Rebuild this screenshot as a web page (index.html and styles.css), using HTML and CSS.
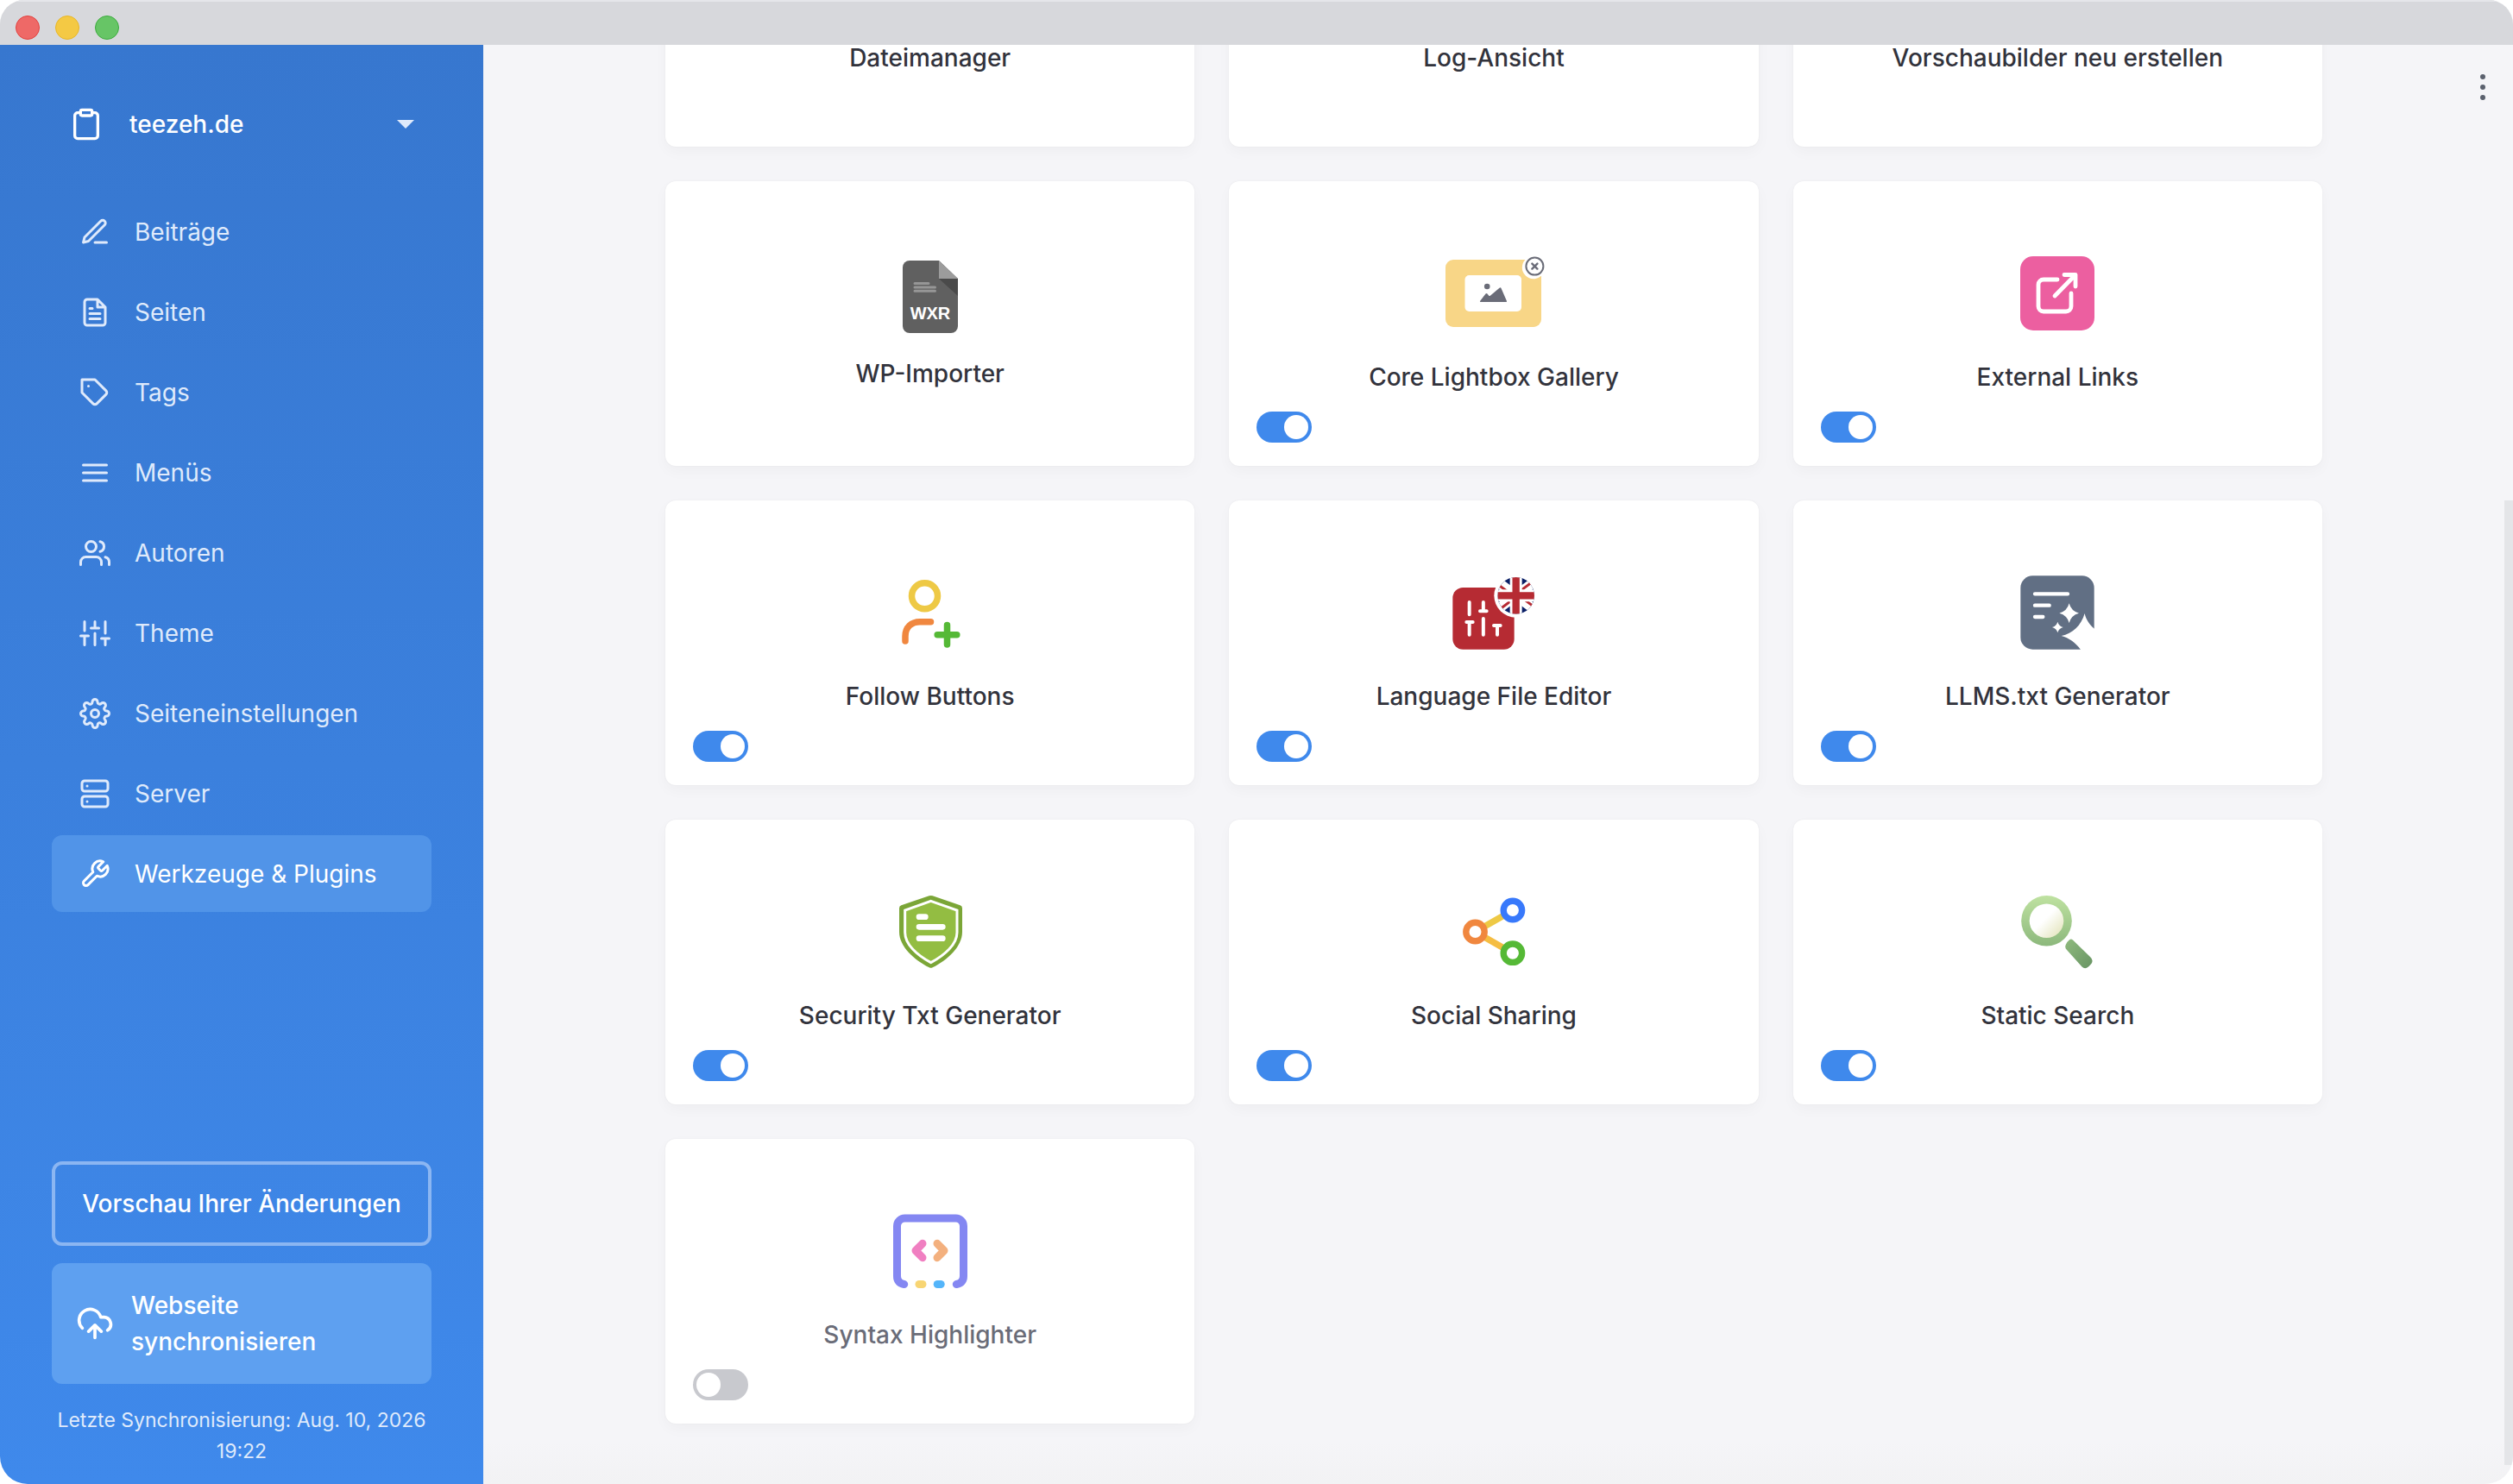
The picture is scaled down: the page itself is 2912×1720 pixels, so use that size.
FILE: index.html
```html
<!DOCTYPE html>
<html lang="de">
<head>
<meta charset="utf-8">
<title>Werkzeuge &amp; Plugins</title>
<link rel="stylesheet" href="styles.css">
</head>
<body>
<div class="window">
  <header class="titlebar">
    <button class="light light-close" type="button"></button>
    <button class="light light-min" type="button"></button>
    <button class="light light-max" type="button"></button>
  </header>
  <div class="app">
    <aside class="sidebar">
      <button class="site" type="button">
        <svg class="site-icon stroke-icon" viewBox="0 0 24 24"><path d="M16 4h2a2 2 0 0 1 2 2v14a2 2 0 0 1-2 2H6a2 2 0 0 1-2-2V6a2 2 0 0 1 2-2h2"/><rect x="8" y="2" width="8" height="4" rx="1"/></svg>
        <span class="site-name">teezeh.de</span>
        <svg class="caret" viewBox="0 0 20 10"><path d="M0 0h20L10 10z"/></svg>
      </button>
      <nav class="menu">
        <a class="menu-item" href="#"><svg class="menu-icon stroke-icon" viewBox="0 0 24 24"><path d="M12 20h9M16.500 3.500a2.121 2.121 0 0 1 3 3L7 19l-4 1 1-4z"/></svg>Beiträge</a>
        <a class="menu-item" href="#"><svg class="menu-icon stroke-icon" viewBox="0 0 24 24"><path d="M14 2H6a2 2 0 0 0-2 2v16a2 2 0 0 0 2 2h12a2 2 0 0 0 2-2V8zM14 2v6h6M16 13H8M16 17H8M10 9H8"/></svg>Seiten</a>
        <a class="menu-item" href="#"><svg class="menu-icon stroke-icon" viewBox="0 0 24 24"><path d="M20.590 13.410l-7.170 7.170a2 2 0 0 1-2.830 0L2 12V2h10l8.590 8.590a2 2 0 0 1 0 2.820zM7 7h.01"/></svg>Tags</a>
        <a class="menu-item" href="#"><svg class="menu-icon stroke-icon" viewBox="0 0 24 24"><path d="M3 12h18M3 6h18M3 18h18"/></svg>Menüs</a>
        <a class="menu-item" href="#"><svg class="menu-icon stroke-icon" viewBox="0 0 24 24"><path d="M17 21v-2a4 4 0 0 0-4-4H5a4 4 0 0 0-4 4v2M23 21v-2a4 4 0 0 0-3-3.870M16 3.130a4 4 0 0 1 0 7.750"/><circle cx="9" cy="7" r="4"/></svg>Autoren</a>
        <a class="menu-item" href="#"><svg class="menu-icon stroke-icon" viewBox="0 0 24 24"><path d="M4 21v-7M4 10V3M12 21v-9M12 8V3M20 21v-5M20 12V3M1 14h6M9 8h6M17 16h6"/></svg>Theme</a>
        <a class="menu-item" href="#"><svg class="menu-icon stroke-icon" viewBox="0 0 24 24"><circle cx="12" cy="12" r="3"/><path d="M19.400 15a1.650 1.650 0 0 0 .33 1.820l.06.06a2 2 0 0 1 0 2.830 2 2 0 0 1-2.830 0l-.06-.06a1.650 1.650 0 0 0-1.820-.33 1.650 1.650 0 0 0-1 1.510V21a2 2 0 0 1-2 2 2 2 0 0 1-2-2v-.09A1.650 1.650 0 0 0 9 19.400a1.650 1.650 0 0 0-1.820.33l-.06.06a2 2 0 0 1-2.830 0 2 2 0 0 1 0-2.830l.06-.06a1.650 1.650 0 0 0 .33-1.820 1.650 1.650 0 0 0-1.510-1H3a2 2 0 0 1-2-2 2 2 0 0 1 2-2h.09A1.650 1.650 0 0 0 4.600 9a1.650 1.650 0 0 0-.33-1.820l-.06-.06a2 2 0 0 1 0-2.830 2 2 0 0 1 2.830 0l.06.06a1.650 1.650 0 0 0 1.820.33H9a1.650 1.650 0 0 0 1-1.510V3a2 2 0 0 1 2-2 2 2 0 0 1 2 2v.09a1.650 1.650 0 0 0 1 1.510 1.650 1.650 0 0 0 1.820-.33l.06-.06a2 2 0 0 1 2.830 0 2 2 0 0 1 0 2.830l-.06.06a1.650 1.650 0 0 0-.33 1.820V9a1.650 1.650 0 0 0 1.510 1H21a2 2 0 0 1 2 2 2 2 0 0 1-2 2h-.09a1.650 1.650 0 0 0-1.510 1z"/></svg>Seiteneinstellungen</a>
        <a class="menu-item" href="#"><svg class="menu-icon stroke-icon" viewBox="0 0 24 24"><rect x="2" y="2" width="20" height="8" rx="2"/><rect x="2" y="14" width="20" height="8" rx="2"/><path d="M6 6h.01M6 18h.01"/></svg>Server</a>
        <a class="menu-item menu-item-active" href="#"><svg class="menu-icon stroke-icon" viewBox="0 0 24 24"><path d="M14.700 6.300a1 1 0 0 0 0 1.400l1.600 1.600a1 1 0 0 0 1.400 0l3.770-3.770a6 6 0 0 1-7.940 7.940l-6.910 6.910a2.120 2.120 0 0 1-3-3l6.910-6.910a6 6 0 0 1 7.940-7.940l-3.760 3.760z"/></svg>Werkzeuge &amp; Plugins</a>
      </nav>
      <div class="actions">
        <button class="preview" type="button">Vorschau Ihrer Änderungen</button>
        <button class="sync" type="button">
          <svg class="sync-icon stroke-icon" viewBox="0 0 24 24"><path d="M12 13v8M4 14.899A7 7 0 1 1 15.710 8h1.790a4.500 4.500 0 0 1 2.500 8.242M8 17l4-4 4 4"/></svg>
          <span>Webseite synchronisieren</span>
        </button>
        <p class="sync-note">Letzte Synchronisierung: Aug. 10, 2026 19:22</p>
      </div>
    </aside>
    <main class="main">
      <div class="grid">
        <a class="card" href="#"><span class="card-icon"></span><span class="card-title">Dateimanager</span></a>
        <a class="card" href="#"><span class="card-icon"></span><span class="card-title">Log-Ansicht</span></a>
        <a class="card" href="#"><span class="card-icon"></span><span class="card-title">Vorschaubilder neu erstellen</span></a>

        <a class="card card-tool" href="#">
          <svg class="card-icon" viewBox="0 0 64 84">
            <path fill="#606060" d="M8 0h34l22 21v55a8 8 0 0 1-8 8H8a8 8 0 0 1-8-8V8a8 8 0 0 1 8-8z"/>
            <path fill="#4a4a4a" d="M42 21h22v20z"/><path fill="#9c9c9c" d="M42 0l22 21H42z"/>
            <path stroke="#969696" stroke-width="3" stroke-linecap="round" d="M14 26.500h16M14 31h23.500M14 35.200h23.500"/>
            <text class="wxr" x="32" y="68" text-anchor="middle">WXR</text>
          </svg>
          <span class="card-title">WP-Importer</span>
        </a>
        <article class="card">
          <svg class="card-icon" viewBox="1670 297 122 86">
            <rect x="1675" y="301" width="111" height="78" rx="9" fill="#f8d687"/>
            <rect x="1697.500" y="319" width="65.500" height="42" rx="5" fill="#fff"/>
            <path fill="#6a6c78" d="M1715 349l6.500-8.500q1-1 2 0l1.800 2.200q.7.600 1.500 0l10.700-9q1.500-1 2.200.8l6.300 14.500q.3 1-.7 1h-29.500q-1.200 0-.8-1z"/>
            <circle cx="1723.200" cy="332" r="3.300" fill="#6a6c78"/>
            <circle cx="1777" cy="310" r="13.200" fill="#fff"/>
            <circle cx="1778.400" cy="308.600" r="10" fill="#fff" stroke="#6a6c78" stroke-width="2"/>
            <path stroke="#6a6c78" stroke-width="2.400" stroke-linecap="round" d="M1775.400 305.600l6 6m0-6l-6 6"/>
          </svg>
          <label class="card-title" for="t-lightbox">Core Lightbox Gallery</label>
          <input class="toggle" id="t-lightbox" type="checkbox" checked>
        </article>
        <article class="card">
          <svg class="card-icon" viewBox="0 0 86 86">
            <rect width="86" height="86" rx="15" fill="#ec5fa0"/>
            <path fill="none" stroke="#fff" stroke-width="4.800" stroke-linecap="round" stroke-linejoin="round" d="M43 27H27a6 6 0 0 0-6 6v25a6 6 0 0 0 6 6h26a6 6 0 0 0 6-6V43M40 46l24-24.500M51 21.500h13V35"/>
          </svg>
          <label class="card-title" for="t-external">External Links</label>
          <input class="toggle" id="t-external" type="checkbox" checked>
        </article>

        <article class="card">
          <svg class="card-icon" viewBox="0 0 86 86" fill="none" stroke-width="7.500" stroke-linecap="round">
            <circle cx="36.500" cy="23.700" r="15" stroke="#eec945"/>
            <path stroke="#f0873f" d="M14 76v-5.500C14 60 21 53.700 31 53.700h12.500"/>
            <path stroke="#55b936" d="M51.200 68.700h22.600M62.500 57.400V80"/>
          </svg>
          <label class="card-title" for="t-follow">Follow Buttons</label>
          <input class="toggle" id="t-follow" type="checkbox" checked>
        </article>
        <article class="card">
          <svg class="card-icon" viewBox="129 51 288 258">
            <defs><clipPath id="flag"><circle cx="350" cy="121" r="64"/></clipPath></defs>
            <rect x="130" y="93" width="214" height="215" rx="36" fill="#b62b33"/>
            <path fill="none" stroke="#fff" stroke-width="12" stroke-linecap="round" d="M188 144v43M236.500 144v31M225 175h23M178 213h22M188 213v44M236.500 201v56M273 225h23M285 225v32"/>
            <circle cx="350" cy="121" r="76" fill="#fff"/>
            <g clip-path="url(#flag)">
              <path fill="#0a1f66" d="M286 57h128v128H286z"/>
              <path stroke="#fff" stroke-width="34" d="M262 55l176 132M438 55L262 187"/>
              <path stroke="#b62b33" stroke-width="9" d="M266 66l84 63M434 176l-84-63M426 59l-84 63M274 183l84-63"/>
              <path stroke="#fff" stroke-width="42" d="M350 57v128M286 121h128"/>
              <path stroke="#b62b33" stroke-width="25" d="M350 57v128M286 121h128"/>
            </g>
          </svg>
          <label class="card-title" for="t-language">Language File Editor</label>
          <input class="toggle" id="t-language" type="checkbox" checked>
        </article>
        <article class="card">
          <svg class="card-icon" viewBox="123 81 258 258">
            <rect x="124" y="82" width="256" height="256" rx="42" fill="#616f84"/>
            <path stroke="#fff" stroke-width="13" stroke-linecap="round" d="M174 145h114M174 185h50M174 225h28"/>
            <path fill="#fff" d="M293 178q7 27 34 34-27 7-34 34-7-27-34-34 27-7 34-34zM253 242q4 15 19 19-15 4-19 19-4-15-19-19 15-4 19-19z"/>
            <path fill="#fff" d="M347 213C335 255 305 283 266 291c26 7 50 24 67 48h49v-72c-18-14-30-32-35-54z"/>
          </svg>
          <label class="card-title" for="t-llms">LLMS.txt Generator</label>
          <input class="toggle" id="t-llms" type="checkbox" checked>
        </article>

        <article class="card">
          <svg class="card-icon" viewBox="75 81 258 258">
            <path fill="#7ba637" d="M200 85q6-2 12 0l96 33q7 3 7 10v82c0 52-52 98-103 124q-6 3-12 0C149 308 96 262 96 210v-82q0-7 7-10z"/>
            <path fill="#93bd42" stroke="#fff" stroke-width="9" d="M206 103l91 32v77c0 42-44 80-91 105-47-25-90-63-90-105v-77z"/>
            <path stroke="#fff" stroke-width="20" stroke-linecap="round" d="M165 158h22M165 193h82M165 233h82"/>
          </svg>
          <label class="card-title" for="t-security">Security Txt Generator</label>
          <input class="toggle" id="t-security" type="checkbox" checked>
        </article>
        <article class="card">
          <svg class="card-icon" viewBox="0 0 86 86" fill="none" stroke-width="7.400">
            <path stroke="#eec945" d="M31 37.500l25-14.300"/><path stroke="#f5bd42" d="M31 48.500l25 14.300"/>
            <circle cx="64.900" cy="18" r="10.700" stroke="#3879fb"/>
            <circle cx="21.500" cy="43" r="10.700" stroke="#f0873f"/>
            <circle cx="64.900" cy="67.700" r="10.700" stroke="#55b936"/>
          </svg>
          <label class="card-title" for="t-social">Social Sharing</label>
          <input class="toggle" id="t-social" type="checkbox" checked>
        </article>
        <article class="card">
          <svg class="card-icon" viewBox="0 0 86 86">
            <defs>
              <linearGradient id="rim" x2="0" y2="1"><stop stop-color="#bfe2a1"/><stop offset="1" stop-color="#8cb87c"/></linearGradient>
              <linearGradient id="lens" x2="1" y2="1"><stop offset=".45" stop-color="#fff"/><stop offset=".9" stop-color="#e5e6c0"/></linearGradient>
              <linearGradient id="grip" x2="1" y2="1"><stop stop-color="#8fba7e"/><stop offset="1" stop-color="#689463"/></linearGradient>
            </defs>
            <circle cx="30.500" cy="30.300" r="29.300" fill="url(#rim)"/>
            <circle cx="30.500" cy="30.300" r="19.800" fill="url(#lens)"/>
            <path fill="url(#grip)" d="M57 52.300q2-1.500 4 .3l20 19.500q5 4.500.5 8.800l-2.500 2.500q-4 3.500-7.500 0L54 64q-3-3-1-6.500 1.300-3 4-5.200z"/>
          </svg>
          <label class="card-title" for="t-search">Static Search</label>
          <input class="toggle" id="t-search" type="checkbox" checked>
        </article>

        <article class="card card-off">
          <svg class="card-icon" viewBox="0 0 86 86" fill="none" stroke-width="9" stroke-linecap="round" stroke-linejoin="round">
            <path stroke="#8487f2" d="M12.700 81.500Q4.500 80 4.500 72V14a9 9 0 0 1 9-9h59a9 9 0 0 1 9 9v58q0 8-8.200 9.500"/>
            <path stroke="#f07fc1" d="M34 34.300l-8 8.200 8 8.200"/><path stroke="#f3b07e" d="M51 34.300l8 8.200-8 8.200"/>
            <path stroke="#f8d573" d="M30 81.500h4"/><path stroke="#54b5fa" d="M51.200 81.500h4"/>
          </svg>
          <label class="card-title" for="t-syntax">Syntax Highlighter</label>
          <input class="toggle" id="t-syntax" type="checkbox">
        </article>
      </div>
      <button class="more" type="button"><svg class="more-icon" viewBox="0 0 6 30"><circle cx="3" cy="3" r="3"/><circle cx="3" cy="15" r="3"/><circle cx="3" cy="27" r="3"/></svg></button>
      <div class="scrollbar"></div>
    </main>
  </div>
</div>
</body>
</html>
```
FILE: styles.css
```css
* { box-sizing: border-box; }

body {
  margin: 0;
  background: #fff;
  font-family: Inter, "Liberation Sans", sans-serif;
  font-size: 28px;
  color: #32333c;
}

button {
  font: inherit;
  color: inherit;
  border: 0;
  padding: 0;
  background: none;
}

a { color: inherit; text-decoration: none; }

.window {
  display: flex;
  flex-direction: column;
  height: 100vh;
  border-radius: 28px 28px 32px 32px;
  overflow: hidden;
}

.titlebar {
  display: flex;
  align-items: center;
  gap: 18px;
  flex: none;
  height: 52px;
  padding: 10px 18px 0;
  background: #d7d8dc;
  border-top: 2px solid #e5e6ea;
}

.light {
  width: 28px;
  height: 28px;
  border: 1px solid;
  border-radius: 50%;
}
.light-close { background: #ee6967; border-color: #e2413e; }
.light-min { background: #f4c944; border-color: #e8b625; }
.light-max { background: #67c566; border-color: #3dac3f; }

.app {
  display: flex;
  flex: 1;
  min-height: 0;
}

.stroke-icon {
  flex: none;
  fill: none;
  stroke: currentColor;
  stroke-width: 2;
  stroke-linecap: round;
  stroke-linejoin: round;
}

/* Sidebar */
.sidebar {
  display: flex;
  flex-direction: column;
  flex: none;
  width: 560px;
  padding: 62px 60px 20px;
  background: linear-gradient(#3777cf, #3b80dd 50%, #3f89eb);
  color: #fff;
}

.site {
  display: flex;
  align-items: center;
  height: 60px;
  margin-bottom: 50px;
  padding: 0 20px;
  font-weight: 500;
  text-align: left;
}
.site-icon { width: 40px; height: 40px; margin-right: 30px; }
.site-name { flex: 1; }
.caret { width: 20px; height: 10px; fill: #dfeafb; }

.menu {
  display: flex;
  flex-direction: column;
  gap: 4px;
}
.menu-item {
  display: flex;
  align-items: center;
  gap: 28px;
  min-height: 89px;
  padding: 0 32px;
  border-radius: 12px;
  color: #dfeafb;
}
.menu-item-active {
  background: #5194e8;
  color: #fff;
}
.menu-icon { width: 36px; height: 36px; }

.actions {
  display: flex;
  flex-direction: column;
  margin-top: auto;
}
.preview {
  height: 98px;
  margin-bottom: 20px;
  border: 4px solid #8bb6f2;
  border-radius: 12px;
  font-weight: 500;
}
.sync {
  display: flex;
  align-items: center;
  gap: 20px;
  min-height: 140px;
  padding: 28px;
  border-radius: 12px;
  background: #5ea0f0;
  font-weight: 500;
  line-height: 42px;
  text-align: left;
}
.sync-icon { width: 44px; height: 44px; }
.sync-note {
  margin: 24px 0 0;
  font-size: 23px;
  line-height: 36px;
  text-align: center;
  color: #dfeafb;
}

/* Main area, scrolled to its end */
.main {
  position: relative;
  display: flex;
  align-items: flex-end;
  justify-content: center;
  flex: 1;
  padding: 0 10px 70px 0;
  overflow: hidden;
  background: linear-gradient(#f5f5f8, #f5f5f8 97%, #f2f2f4);
}

.grid {
  display: grid;
  grid-template-columns: repeat(3, 1fr);
  gap: 40px;
  flex: 0 1 1920px;
}

.card {
  display: flex;
  flex-direction: column;
  align-items: center;
  min-height: 330px;
  padding: 87px 32px 27px;
  background: #fff;
  border-radius: 12px;
  box-shadow: 0 0 2px rgba(0, 0, 0, .06), 0 6px 16px rgba(0, 0, 0, .03);
}
.card-icon { flex: none; height: 86px; }
.card-title {
  margin-top: 37px;
  font-weight: 500;
  line-height: 34px;
}
.card-tool { padding-top: 92px; }
.card-tool .card-icon { height: 84px; }
.card-tool .card-title { margin-top: 30px; }
.card-off .card-title { color: #6a6c78; }
.wxr {
  font: bold 20px "Liberation Sans", sans-serif;
  fill: #fff;
}

.toggle {
  appearance: none;
  display: flex;
  align-self: flex-start;
  width: 64px;
  height: 36px;
  margin: auto 0 0;
  padding: 4px;
  border-radius: 18px;
  background: #c8c9ce;
}
.toggle::before {
  content: "";
  width: 28px;
  height: 28px;
  border-radius: 50%;
  background: #fff;
}
.toggle:checked {
  justify-content: flex-end;
  background: #3f89ec;
}

.more {
  position: absolute;
  top: 24px;
  right: 20px;
  display: flex;
  align-items: center;
  justify-content: center;
  width: 30px;
  height: 50px;
}
.more-icon { width: 6px; height: 30px; fill: #5b616e; }

.scrollbar {
  position: absolute;
  right: 0;
  bottom: 22px;
  width: 10px;
  height: 67%;
  background: #e4e5e8;
}
```
